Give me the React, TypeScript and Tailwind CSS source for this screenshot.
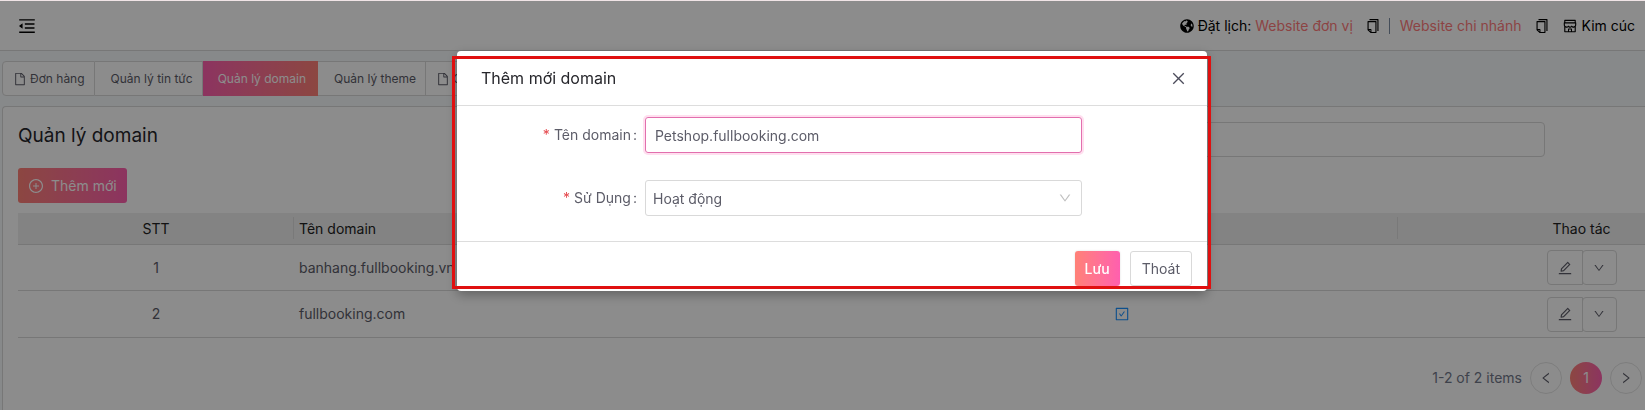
import { useState } from "react";
import {
  AiOutlineCheckSquare,
  AiOutlineClose,
  AiOutlineCopy,
  AiOutlineDown,
  AiOutlineEdit,
  AiOutlineFile,
  AiOutlineLeft,
  AiOutlineMenuFold,
  AiOutlinePlusCircle,
  AiOutlineRight,
  AiOutlineShop,
} from "react-icons/ai";
import { FaGlobeAmericas } from "react-icons/fa";

const tabs = [
  { label: "Đơn hàng", icon: true, active: false },
  { label: "Quản lý tin tức", icon: false, active: false },
  { label: "Quản lý domain", icon: false, active: true },
  { label: "Quản lý theme", icon: false, active: false },
  { label: "CTV", icon: true, active: false },
];

const domains = [
  { id: 1, name: "banhang.fullbooking.vn" },
  { id: 2, name: "fullbooking.com" },
];

function Header() {
  return (
    <header className="flex h-[50px] items-center justify-between border-b border-[#d9d9d9] bg-white pr-2.5 pl-[17px] text-black">
      <button type="button" aria-label="Thu gọn menu">
        <AiOutlineMenuFold className="size-5" />
      </button>
      <div className="flex items-center">
        <FaGlobeAmericas className="mr-1 size-3.5" />
        <span className="mr-1">Đặt lịch:</span>
        <a href="#don-vi" className="text-[#ff7b7b]">Website đơn vị</a>
        <button type="button" aria-label="Sao chép link đơn vị" className="ml-3">
          <AiOutlineCopy className="size-4" />
        </button>
        <span className="mr-2.5 ml-2 h-4 w-px bg-[#7d8ca3]" />
        <a href="#chi-nhanh" className="text-[#ff7b7b]">Website chi nhánh</a>
        <button type="button" aria-label="Sao chép link chi nhánh" className="mr-3 ml-3">
          <AiOutlineCopy className="size-4" />
        </button>
        <AiOutlineShop className="mr-1 size-4" />
        <span>Kim cúc</span>
      </div>
    </header>
  );
}

function Tabs() {
  return (
    <nav className="flex text-xs">
      {tabs.map((tab) => (
        <button
          key={tab.label}
          type="button"
          className={
            tab.active
              ? "h-[35px] bg-linear-to-r from-[#ff5fae] to-[#ff8177] pr-3 pl-[15px] text-white"
              : "flex h-[35px] items-center gap-[3px] border border-l-0 border-[#d9d9d9] bg-white pr-[9px] pl-4 first:rounded-l first:border-l first:pl-2.5 last:pl-2.5"
          }
        >
          {tab.icon && <AiOutlineFile className="size-3.5" />}
          {tab.label}
        </button>
      ))}
    </nav>
  );
}

function DomainTable() {
  return (
    <table className="w-full table-fixed border-separate border-spacing-0">
      <colgroup>
        <col className="w-[276px]" />
        <col />
        <col />
        <col className="w-[120px]" />
        <col className="w-[127px]" />
      </colgroup>
      <thead>
        <tr className="h-8 bg-[#eeeeee] text-[#222222] [&>th]:border-b [&>th]:border-[#d9d9d9] [&>th]:font-normal">
          <th className="relative">
            STT
            <span className="absolute top-1 right-0 h-[22px] w-px bg-[#dddddd]" />
          </th>
          <th className="px-[5px] text-left">Tên domain</th>
          <th className="relative">
            Sử dụng
            <span className="absolute top-1 right-0 h-[22px] w-px bg-[#dddddd]" />
          </th>
          <th />
          <th>Thao tác</th>
        </tr>
      </thead>
      <tbody>
        {domains.map((d) => (
          <tr key={d.id} className="h-[46px] last:h-[47px] [&>td]:border-b [&>td]:border-[#d9d9d9]">
            <td className="text-center">{d.id}</td>
            <td className="px-[5px]">{d.name}</td>
            <td>
              <AiOutlineCheckSquare className="mx-auto size-4 text-[#1890ff]" />
            </td>
            <td />
            <td>
              <div className="flex justify-center">
                <button type="button" aria-label="Sửa" className="flex h-[35px] w-9 items-center justify-center rounded-l-sm border border-[#d9d9d9]">
                  <AiOutlineEdit className="size-4" />
                </button>
                <button type="button" aria-label="Thêm thao tác" className="-ml-px flex h-[35px] w-[35px] items-center justify-center rounded-sm border border-[#d9d9d9]">
                  <AiOutlineDown className="size-3" />
                </button>
              </div>
            </td>
          </tr>
        ))}
      </tbody>
    </table>
  );
}

function Pagination() {
  return (
    <div className="mt-6 flex items-center justify-end gap-2 pr-[3px]">
      <span className="text-[#72788a]">1-2 of 2 items</span>
      <button type="button" aria-label="Trang trước" className="flex size-8 items-center justify-center rounded-full border border-[#e4e4e4]">
        <AiOutlineLeft className="size-3.5" />
      </button>
      <button type="button" className="size-8 rounded-full bg-linear-to-r from-[#ff8177] to-[#ff5fae] text-white">1</button>
      <button type="button" aria-label="Trang sau" className="flex size-8 items-center justify-center rounded-full border border-[#e4e4e4]">
        <AiOutlineRight className="size-3.5" />
      </button>
    </div>
  );
}

function DomainModal() {
  const [domain, setDomain] = useState("Petshop.fullbooking.com");

  return (
    <div className="fixed inset-x-0 top-px bottom-0 bg-black/45 pt-[50px] pl-[19px]">
      <div
        role="dialog"
        aria-labelledby="modal-title"
        className="relative mx-auto w-[750px] rounded-sm bg-white shadow-[0_4px_12px_rgba(0,0,0,0.3)]"
      >
        <div className="flex h-[55px] items-center justify-between border-b border-[#dddddd] pr-5 pl-6">
          <h2 id="modal-title" className="text-base text-[#26262b]">Thêm mới domain</h2>
          <button type="button" aria-label="Đóng" className="text-[#4b4b5a]">
            <AiOutlineClose className="size-[17px]" />
          </button>
        </div>

        <form id="domain-form" className="grid grid-cols-[188px_437px] gap-y-[27px] pt-[11px] pb-[25px]">
          <label htmlFor="domain" className="flex items-center justify-end pr-2">
            <span className="mr-1 text-[#e5484d]">*</span>Tên domain<span className="ml-0.5">:</span>
          </label>
          <input
            id="domain"
            value={domain}
            onChange={(e) => setDomain(e.target.value)}
            className="h-9 rounded-[3px] border border-[#e26fae] px-[9px] shadow-[0_0_0_2px_rgba(255,95,174,0.2)] outline-none"
          />
          <label htmlFor="status" className="flex items-center justify-end pr-2">
            <span className="mr-1 text-[#e5484d]">*</span>Sử Dụng<span className="ml-0.5">:</span>
          </label>
          <div className="relative">
            <select id="status" className="h-9 w-full appearance-none rounded-[3px] border border-[#d9d9d9] bg-white px-[7px] pt-0.5">
              <option>Hoạt động</option>
              <option>Ngừng hoạt động</option>
            </select>
            <AiOutlineDown className="pointer-events-none absolute top-[11px] right-2.5 size-3.5 text-[#bfbfbf]" />
          </div>
        </form>

        <div className="flex h-[50px] items-start justify-end gap-2.5 border-t border-[#dddddd] pt-[9px] pr-[15px]">
          <button type="submit" form="domain-form" className="h-[35px] rounded-[3px] bg-linear-to-r from-[#ff8177] to-[#ff5fae] px-2.5 font-medium text-white shadow-[0_0_2px_rgba(0,0,0,0.15)]">
            Lưu
          </button>
          <button type="button" className="h-[35px] rounded-[3px] border border-[#d9d9d9] bg-white px-[11px]">Thoát</button>
        </div>

        {/* highlight frame around the dialog */}
        <div className="pointer-events-none absolute top-[5px] -right-1 bottom-0.5 -left-[5px] border-3 border-[#e01010]" />
      </div>
    </div>
  );
}

export default function App() {
  return (
    <div className="flex min-h-screen flex-col overflow-hidden border-t border-[#f0e4e6] bg-[#f6f9fc] font-['Inter',sans-serif] text-sm text-[#5c5c68]">
      <Header />
      <main className="flex flex-1 flex-col gap-2.5 pt-2.5 pl-0.5">
        <Tabs />
        <section className="flex-1 rounded-tl border-t border-l border-[#d9d9d9] bg-white pl-[15px]">
          <div className="flex items-start justify-between pt-[15px] pr-[100px]">
            <h1 className="text-[19px] leading-7 text-[#26262b]">Quản lý domain</h1>
            <input aria-label="Tìm kiếm" className="h-[35px] w-[600px] rounded border border-[#d9d9d9] px-2.5" />
          </div>
          <button type="button" className="mt-[11px] mb-2.5 flex h-[35px] items-center gap-[7px] rounded-[3px] bg-linear-to-r from-[#ff8177] to-[#ff5fae] px-2.5 text-white">
            <AiOutlinePlusCircle className="size-4" />
            Thêm mới
          </button>
          <DomainTable />
          <Pagination />
        </section>
      </main>
      <DomainModal />
    </div>
  );
}
